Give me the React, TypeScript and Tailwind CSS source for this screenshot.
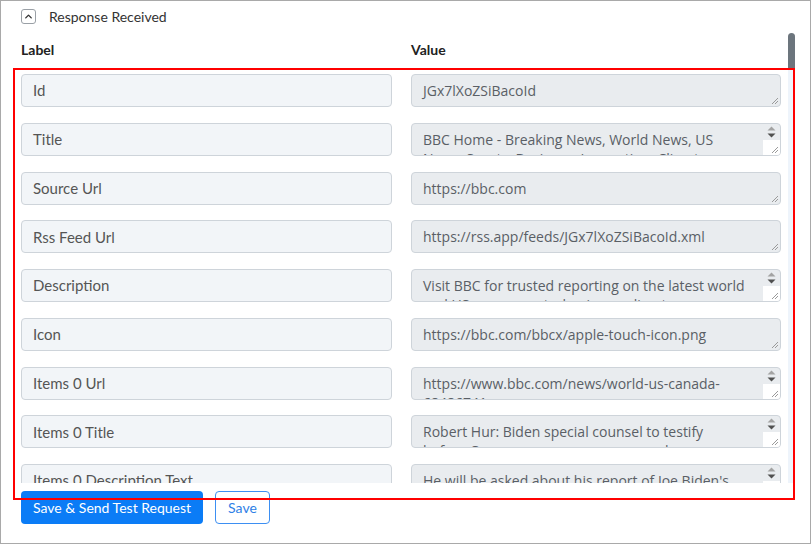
import { ChevronUp } from 'lucide-react';

const rows = [
  { label: 'Id', value: 'JGx7lXoZSiBacoId', scroll: false },
  { label: 'Title', value: 'BBC Home - Breaking News, World News, US News, Sports, Business, Innovation, Climate, Culture, Travel, Video & Audio', scroll: true },
  { label: 'Source Url', value: 'https://bbc.com', scroll: false },
  { label: 'Rss Feed Url', value: 'https://rss.app/feeds/JGx7lXoZSiBacoId.xml', scroll: false },
  { label: 'Description', value: 'Visit BBC for trusted reporting on the latest world and US news, sports, business, climate, innovation, culture and much more.', scroll: true },
  { label: 'Icon', value: 'https://bbc.com/bbcx/apple-touch-icon.png', scroll: false },
  { label: 'Items 0 Url', value: 'https://www.bbc.com/news/world-us-canada-68486741', scroll: true },
  { label: 'Items 0 Title', value: 'Robert Hur: Biden special counsel to testify before Congress over memory remarks', scroll: true },
  { label: 'Items 0 Description Text', value: "He will be asked about his report of Joe Biden's handling of classified documents.", scroll: true },
  { label: 'Items 0 Description Html', value: "<p>He will be asked about his report of Joe Biden's handling of classified documents.</p>", scroll: true },
];

function Grip() {
  return (
    <svg width="9" height="9" viewBox="0 0 9 9" className="block">
      <path d="M8 2 L2 8 M8 5 L5 8" stroke="#9a9a9a" strokeWidth="1" fill="none" />
    </svg>
  );
}

function ValueBox({ value, scroll }: { value: string; scroll: boolean }) {
  return (
    <div className="h-[33px] flex bg-[#e9ecef] border border-[#ced4da] rounded-[4px] overflow-hidden">
      <div className="flex-1 min-w-0 pl-[11px] pr-[16px] pt-[6px] font-['Open_Sans',_sans-serif] text-[14px] leading-[19px] text-[#5a5f66] break-words">
        {value}
      </div>
      {scroll ? (
        <div className="w-[17px] flex flex-col shrink-0">
          <div className="h-[16px] flex flex-col items-center justify-center gap-[2px]">
            <svg width="9" height="5" viewBox="0 0 9 5"><path d="M0.5 4.5 L4.5 0.5 L8.5 4.5 Z" fill="#a3a3a3" /></svg>
            <svg width="9" height="5" viewBox="0 0 9 5"><path d="M0.5 0.5 L4.5 4.5 L8.5 0.5 Z" fill="#505050" /></svg>
          </div>
          <div className="flex-1 bg-white flex items-end justify-end pr-[1px] pb-[1px]">
            <Grip />
          </div>
        </div>
      ) : (
        <div className="w-[12px] flex items-end justify-end pr-[1px] pb-[1px] shrink-0">
          <Grip />
        </div>
      )}
    </div>
  );
}

export default function App() {
  return (
    <div className="w-[812px] h-[545px] bg-white">
      <div className="relative w-[811px] h-[544px] border border-[#a9a9a9] bg-white font-['Lato',_sans-serif] text-[#333]">
        <div className="h-[32px] flex items-center pl-[20px] pb-[1px] gap-[13px]">
          <div className="w-[15px] h-[15px] border border-[#9aa0a6] rounded-[3px] flex items-center justify-center">
            <ChevronUp className="w-[11px] h-[11px] text-[#333]" strokeWidth={3} />
          </div>
          <span className="text-[14px] text-[#333]">Response Received</span>
        </div>

        <div className="flex h-[450px]">
          <div className="flex-1 overflow-hidden pl-[20px]">
            <div className="grid grid-cols-[371px_370px] gap-x-[19px] pt-[8px] h-[41px] text-[14px] font-bold text-[#222] leading-[18px]">
              <span>Label</span>
              <span>Value</span>
            </div>
            <div className="grid grid-cols-[371px_370px] gap-x-[19px] gap-y-[15.75px]">
              {rows.map((r) => (
                <div key={r.label} className="contents">
                  <div className="h-[33px] flex items-center bg-[#f2f5f8] border border-[#ced4da] rounded-[4px] px-[11px] text-[15px] text-[#555] whitespace-nowrap overflow-hidden">
                    {r.label}
                  </div>
                  <ValueBox value={r.value} scroll={r.scroll} />
                </div>
              ))}
            </div>
          </div>
          <div className="w-[7px] mr-[15px] flex flex-col">
            <div className="h-[35px] bg-[#6c757d] rounded-t-[4px]" />
            <div className="flex-1 bg-[#eef4fb]" />
          </div>
        </div>

        <div className="flex items-center gap-[12px] pl-[20px] mt-[8px]">
          <button className="h-[33px] px-[12px] bg-[#0b7cf6] text-white text-[14px] rounded-[4px]">
            Save &amp; Send Test Request
          </button>
          <button className="h-[33px] px-[12px] border border-[#3d8ff2] text-[#2f7fe6] text-[14px] rounded-[4px] bg-white">
            Save
          </button>
        </div>

        <div className="absolute left-[12px] top-[67px] w-[782px] h-[432px] border-2 border-[#ff0000] pointer-events-none" />
      </div>
    </div>
  );
}
